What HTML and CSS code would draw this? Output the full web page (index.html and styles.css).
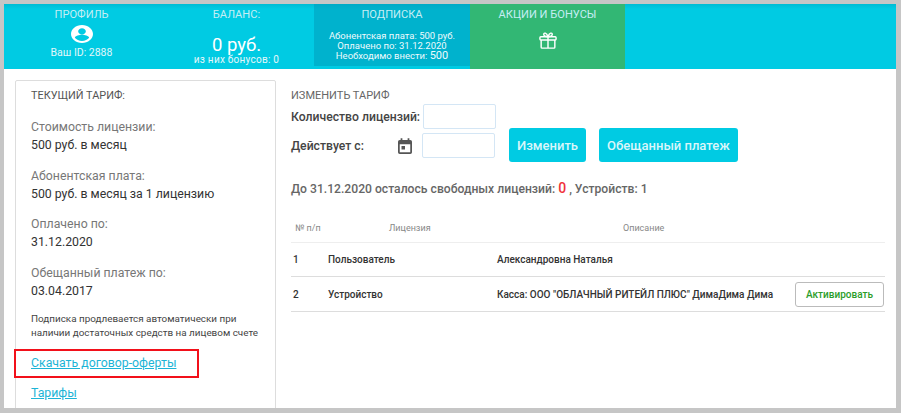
FILE: index.html
```html
<!DOCTYPE html>
<html lang="ru">
<head>
    <meta charset="UTF-8">
    <title>Подписка</title>
    <link rel="stylesheet" href="styles.css">
</head>
<body>
<div id="page">
    <nav class="tabs">
        <a class="tab">
            <span class="tab-title">ПРОФИЛЬ</span>
            <svg class="user-icon" viewBox="2 2 20 20" width="22" height="18" preserveAspectRatio="none"><path fill="#fff" d="M12 2C6.480 2 2 6.480 2 12s4.480 10 10 10 10-4.480 10-10S17.520 2 12 2zm0 3.500c1.930 0 3.500 1.570 3.500 3.500s-1.570 3.500-3.500 3.500S8.500 10.930 8.500 9 10.070 5.500 12 5.500zm0 14.300c-2.700 0-5.100-1.400-6.500-3.500.03-2.150 4.330-3.330 6.500-3.330s6.470 1.180 6.500 3.330c-1.400 2.100-3.800 3.500-6.500 3.500z"/></svg>
            <span class="tab-small">Ваш ID: 2888</span>
        </a>
        <a class="tab">
            <span class="tab-title">БАЛАНС:</span>
            <span class="balance">0 руб.</span>
            <span class="bonus">из них бонусов: 0</span>
        </a>
        <a class="tab tab-active">
            <span class="tab-title">ПОДПИСКА</span>
            <span class="sub-info">
                <span>Абонентская плата: 500 руб.</span>
                <span>Оплачено по: 31.12.2020</span>
                <span>Необходимо внести: <b>500</b></span>
            </span>
        </a>
        <a class="tab tab-green">
            <span class="tab-title">АКЦИИ И БОНУСЫ</span>
            <svg class="gift-icon" viewBox="0 0 20 20" width="20" height="19" fill="none" stroke="#fff" stroke-width="1.500"><rect x="1.500" y="6" width="17" height="3.500" rx="1"/><path d="M2.800 9.500V17a1 1 0 0 0 1 1h12.400a1 1 0 0 0 1-1V9.500M10 6v12M10 6C8 6 5.500 5.500 5.500 3.500 5.500 1.500 8.500 1.500 10 6zM10 6c2 0 4.500-.5 4.500-2.500 0-2-3-2-4.500 2.500z"/></svg>
        </a>
    </nav>
    <div class="content">
        <aside class="card">
            <h3 class="card-title">ТЕКУЩИЙ ТАРИФ:</h3>
            <div class="field">
                <div class="field-name">Стоимость лицензии:</div>
                <div class="field-value">500 руб. в месяц</div>
            </div>
            <div class="field">
                <div class="field-name">Абонентская плата:</div>
                <div class="field-value">500 руб. в месяц за 1 лицензию</div>
            </div>
            <div class="field">
                <div class="field-name">Оплачено по:</div>
                <div class="field-value">31.12.2020</div>
            </div>
            <div class="field">
                <div class="field-name">Обещанный платеж по:</div>
                <div class="field-value">03.04.2017</div>
            </div>
            <p class="note">Подписка продлевается автоматически при наличии достаточных средств на лицевом счете</p>
            <div class="link-row"><a class="link">Скачать договор-оферты</a><span class="highlight"></span></div>
            <div class="link-row"><a class="link">Тарифы</a></div>
        </aside>
        <main class="main">
            <div class="change">
                <div class="change-form">
                    <h3 class="main-title">ИЗМЕНИТЬ ТАРИФ</h3>
                    <div class="form-row">
                        <label class="form-label">Количество лицензий:</label>
                        <input class="input" type="text">
                    </div>
                    <div class="form-row form-row-date">
                        <label class="form-label date-label">Действует с:</label>
                        <svg class="date-icon" viewBox="0 0 16 18" width="14" height="16"><path fill="#555" d="M3 0h2v2h6V0h2v2h1a2 2 0 0 1 2 2v12a2 2 0 0 1-2 2H2a2 2 0 0 1-2-2V4a2 2 0 0 1 2-2h1V0zM2 7v9h12V7H2zm2 2h4v4H4V9z"/></svg>
                        <input class="input" type="text">
                    </div>
                </div>
                <button class="btn">Изменить</button>
                <button class="btn">Обещанный платеж</button>
            </div>
            <p class="free">До 31.12.2020 осталось свободных лицензий: <span class="zero">0</span> , Устройств: 1</p>
            <table class="licenses">
                <colgroup>
                    <col class="col-num">
                    <col class="col-type">
                    <col class="col-desc">
                    <col>
                </colgroup>
                <thead>
                    <tr>
                        <th class="th-num">№ п/п</th>
                        <th class="th-type">Лицензия</th>
                        <th class="th-desc">Описание</th>
                        <th></th>
                    </tr>
                </thead>
                <tbody>
                    <tr>
                        <td>1</td>
                        <td>Пользователь</td>
                        <td>Александровна Наталья</td>
                        <td></td>
                    </tr>
                    <tr class="row-tall">
                        <td>2</td>
                        <td>Устройство</td>
                        <td>Касса: ООО "ОБЛАЧНЫЙ РИТЕЙЛ ПЛЮС" ДимаДима Дима</td>
                        <td><button class="btn-activate">Активировать</button></td>
                    </tr>
                </tbody>
            </table>
        </main>
    </div>
</div>
</body>
</html>
```

FILE: styles.css
```css
html, body {
    margin: 0;
    height: 100%;
    overflow: hidden;
}

body {
    font-family: Roboto, "Liberation Sans", sans-serif;
    color: #444;
}

#page {
    box-sizing: border-box;
    width: 901px;
    height: 413px;
    border: solid #c6c6c6;
    border-width: 4px 5px 5px 4px;
    background: #fff;
    overflow: hidden;
}

.tabs {
    display: flex;
    height: 65px;
    background: linear-gradient(#00bcd4, #00cbe3 5px);
}

.tab {
    display: flex;
    flex-direction: column;
    align-items: center;
    width: 155px;
    color: #fff;
}

.tab-title {
    margin-top: 4px;
    font-size: 11.100px;
    line-height: 14px;
    color: #c6eef4;
}

.user-icon {
    margin-top: 3px;
}

.tab-small {
    margin-top: 3px;
    font-size: 10.500px;
    line-height: 14px;
    color: #e3f7fa;
}

.balance {
    margin-top: 13px;
    font-size: 18.500px;
    line-height: 20px;
}

.bonus {
    font-size: 10px;
    line-height: 10px;
    color: #e3f7fa;
    letter-spacing: .25px;
}

.tab-active {
    width: 156px;
    height: 62px;
    background: linear-gradient(#00aac6, #00b2cd 6px);
}

.sub-info {
    display: flex;
    flex-direction: column;
    align-items: center;
    margin-top: 9px;
    font-size: 9.500px;
    line-height: 10px;
    color: #eefbfd;
}

.sub-info b {
    font-weight: 400;
    font-size: 11px;
}

.tab-green {
    background: #32b774;
}

.gift-icon {
    margin-top: 9px;
}

.content {
    display: flex;
    align-items: flex-start;
    padding: 11px 11px 0;
}

.card {
    box-sizing: border-box;
    flex: none;
    width: 261px;
    height: 340px;
    padding: 8px 15px 0 15px;
    border: 1px solid #ddd;
    border-radius: 2px;
}

.card-title {
    margin: 0 0 15px;
    font-size: 10.900px;
    line-height: 14px;
    font-weight: 400;
    color: #555;
}

.field {
    margin-bottom: 12.500px;
}

.field-name {
    line-height: 18px;
    font-size: 12.300px;
    color: #777;
}

.field-value {
    line-height: 18px;
    font-size: 12.300px;
    color: #333;
}

.note {
    margin: 0;
    font-size: 9.900px;
    line-height: 13.500px;
    color: #444;
}

.link-row {
    position: relative;
    margin-top: 13.500px;
    line-height: 17px;
}

.link-row + .link-row {
    margin-top: 11px;
}

.link {
    font-size: 12.300px;
    color: #1cb4d6;
    text-decoration: underline;
}

.highlight {
    position: absolute;
    left: -17px;
    top: -4px;
    width: 185px;
    height: 29px;
    box-sizing: border-box;
    border: 2px solid #f2101a;
}

.main {
    flex: 1;
    padding: 9px 0 0 15px;
}

.change {
    display: flex;
    align-items: flex-end;
    gap: 13px;
}

.change-form {
    width: 205px;
    padding-bottom: 4px;
}

.main-title {
    margin: 0;
    font-size: 11px;
    line-height: 14px;
    font-weight: 400;
    color: #666;
}

.form-row {
    display: flex;
    align-items: center;
    height: 25px;
    margin-top: 1px;
}

.form-row-date {
    margin-top: 4px;
}

.form-label {
    width: 132px;
    flex: none;
    font-size: 12.200px;
    font-weight: 500;
    color: #444;
    white-space: nowrap;
}

.date-label {
    width: 107px;
}

.date-icon {
    margin-right: 10px;
    flex: none;
}

.input {
    box-sizing: border-box;
    width: 73px;
    height: 25px;
    padding: 0;
    border: 1px solid #d4e6f5;
    border-radius: 2px;
    background: #fff;
}

.btn {
    height: 34px;
    padding: 0 8px;
    border: 0;
    border-radius: 3px;
    background: #00cbe3;
    color: #d9f6fa;
    font: 500 13px Roboto, "Liberation Sans", sans-serif;
}

.free {
    margin: 18px 0 0;
    font-size: 12.150px;
    line-height: 16px;
    font-weight: 500;
    color: #666;
}

.zero {
    font-size: 14px;
    color: #f0323c;
}

.licenses {
    width: 594px;
    margin-top: 17px;
    border-collapse: collapse;
    table-layout: fixed;
    font-size: 10px;
}

.col-num { width: 35px; }
.col-type { width: 169px; }
.col-desc { width: 298px; }

.licenses th {
    height: 28px;
    padding: 0;
    font-size: 9px;
    font-weight: 400;
    color: #888;
    text-align: left;
    border-bottom: 1px solid #eee;
}

.th-num { padding-left: 4px !important; }
.th-type { padding-left: 63px !important; }
.th-desc { padding-left: 128px !important; }

.licenses td {
    height: 33px;
    padding: 0 0 0 2px;
    font-weight: 500;
    color: #333;
    border-bottom: 1px solid #ddd;
}

.licenses .row-tall td {
    height: 34px;
}

.btn-activate {
    display: block;
    width: 89px;
    height: 25px;
    padding: 0;
    border: 1px solid #bbb;
    border-radius: 3px;
    background: #fff;
    color: #2a9d2a;
    font: 500 10px Roboto, "Liberation Sans", sans-serif;
}
```
